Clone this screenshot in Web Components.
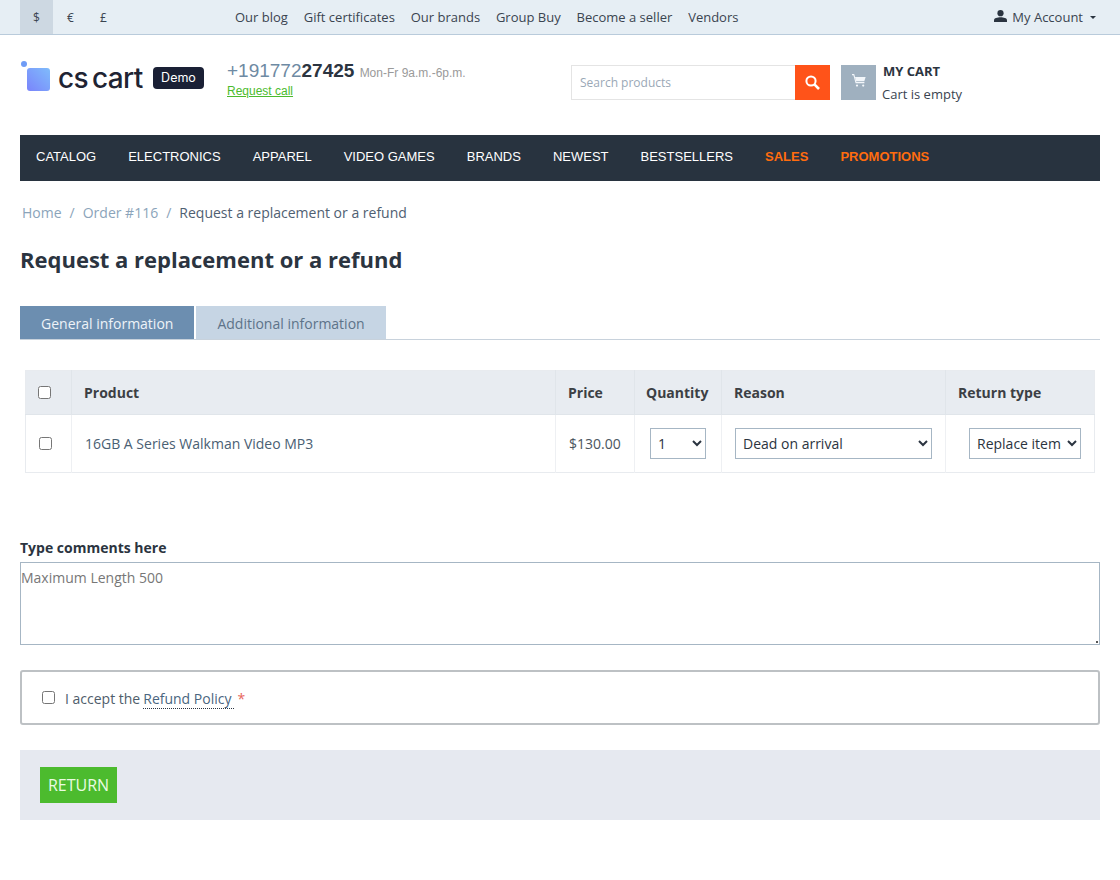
<!DOCTYPE html>
<html lang="en">
<head>
<meta charset="utf-8">
<title>Request a replacement or a refund</title>
<style>
    html, body { margin: 0; background: #fff; }
    body { font-family: "Open Sans", sans-serif; font-size: 14px; color: #2b3440; }
</style>
</head>
<body>
<top-bar></top-bar>
<site-header></site-header>
<main-nav></main-nav>
<page-crumbs></page-crumbs>
<page-tabs></page-tabs>
<return-table></return-table>
<return-form></return-form>

<script>
/* Top strip: currencies, links, account */
class TopBar extends HTMLElement {
    constructor() {
        super();
        this.attachShadow({ mode: 'open' });
    }

    connectedCallback() {
        this.shadowRoot.innerHTML = `
            <style>
                :host {
                    display: flex;
                    height: 34px;
                    padding: 0 20px;
                    background: #e6eef4;
                    border-bottom: 1px solid #b9cbdb;
                    font-size: 13px;
                    color: #3a4450;
                    align-items: stretch;
                }
                .currencies { display: flex; width: 215px; }
                .currencies span {
                    width: 33px;
                    display: flex;
                    align-items: center;
                    justify-content: center;
                    font-size: 12px;
                }
                .currencies span:nth-child(2) { padding-left: 1px; }
                .currencies .active { background: #cdd8e2; }
                .links { display: flex; gap: 15.85px; align-items: center; flex: 1; }
                .account { display: flex; align-items: center; gap: 5px; padding-right: 4px; }
                .account svg { display: block; margin-top: -2px; }
                .caret {
                    width: 0; height: 0;
                    border: 3px solid transparent;
                    border-top: 3px solid #2b3440;
                    border-bottom: 0;
                    margin-left: 2px;
                }
            </style>
            <div class="currencies">
                <span class="active">$</span><span>€</span><span>£</span>
            </div>
            <div class="links">
                <span>Our blog</span>
                <span>Gift certificates</span>
                <span>Our brands</span>
                <span>Group Buy</span>
                <span>Become a seller</span>
                <span>Vendors</span>
            </div>
            <div class="account">
                <svg width="13" height="12" viewBox="0 0 13 12"><circle cx="6.5" cy="3.2" r="3.1" fill="#2b3440"/><path d="M0 12V10.2C0 8.2 3.4 7.3 6.5 7.3S13 8.2 13 10.2V12Z" fill="#2b3440"/></svg>
                <span>My Account</span>
                <i class="caret"></i>
            </div>
        `;
    }
}

/* Logo, phone, search and cart */
class SiteHeader extends HTMLElement {
    constructor() {
        super();
        this.attachShadow({ mode: 'open' });
    }

    connectedCallback() {
        this.shadowRoot.innerHTML = `
            <style>
                :host {
                    display: flex;
                    height: 100px;
                    padding: 0 20px;
                    box-sizing: border-box;
                }
                .logo { width: 207px; display: flex; align-items: flex-start; padding-top: 26px; box-sizing: border-box; }
                .mark { position: relative; width: 30px; height: 30px; flex: none; }
                .mark i { position: absolute; left: 7px; top: 7px; width: 23px; height: 23px; border-radius: 3px; background: linear-gradient(45deg, #7a84fb, #7fbcfb); }
                .mark b { position: absolute; left: 1px; top: 0; width: 6px; height: 6px; border-radius: 50%; background: #6f9cf6; }
                .name { width: 85px; flex: none; font: 500 28px/30px Inter, sans-serif; letter-spacing: -0.6px; color: #1f2433; margin-left: 8px; margin-top: 2px; word-spacing: -3px; white-space: nowrap; }
                .demo {
                    flex: none;
                    margin: 6px 0 0 10px;
                    height: 22px;
                    width: 51px;
                    text-align: center;
                    border-radius: 4px;
                    background: #1a2035;
                    color: #fff;
                    font: 12.5px/22px Inter, sans-serif;
                }
                .phone { width: 344px; padding-top: 24px; font-family: "Liberation Sans", sans-serif; }
                .number { font-size: 19px; line-height: 24px; color: #6e8aa3; }
                .number b { color: #2b3440; }
                .number small { font-size: 12px; color: #9a9a9a; }
                .phone a { display: block; font-size: 12px; line-height: 16px; margin-top: -2px; color: #4cbb2e; text-decoration: underline; }
                .search { display: flex; width: 259px; height: 35px; margin-top: 30px; box-sizing: border-box; }
                .search .box {
                    flex: 1;
                    border: 1px solid #e4e4e4;
                    border-right: 0;
                    color: #9aa8b6;
                    font-size: 12px;
                    line-height: 33px;
                    padding-left: 8px;
                }
                .search button { width: 35px; border: 0; padding: 0; background: #ff5319; display: flex; align-items: center; justify-content: center; }
                .cart { display: flex; margin: 30px 0 0 11px; }
                .cart .icon { width: 35px; height: 35px; background: #9fb0bf; display: flex; align-items: center; justify-content: center; }
                .cart .icon svg { margin-bottom: 4px; }
                .cart .text { margin-left: 6px; font-size: 13px; line-height: 23px; margin-top: -5px; color: #3a4450; }
                .cart strong { display: block; margin-left: 1px; color: #2b3440; }
            </style>
            <div class="logo">
                <div class="mark"><i></i><b></b></div>
                <div class="name">cs cart</div>
                <div class="demo">Demo</div>
            </div>
            <div class="phone">
                <div class="number">+191772<b>27425</b> <small>Mon-Fr 9a.m.-6p.m.</small></div>
                <a>Request call</a>
            </div>
            <div class="search">
                <div class="box">Search products</div>
                <button aria-label="Search">
                    <svg width="15" height="15" viewBox="0 0 15 15" fill="none" stroke="#fff" stroke-width="2"><circle cx="6" cy="6" r="4.6"/><path d="M9.4 9.4L14 14" stroke-width="2.6"/></svg>
                </button>
            </div>
            <div class="cart">
                <div class="icon">
                    <svg width="14" height="13" viewBox="0 0 14 13" fill="none" stroke="#f2f6fa">
                        <path d="M0 .6H1.8L4 8.6H12.4" stroke-width="1.1"/>
                        <path d="M3 3H13.6L12.3 7.2H4.2Z" fill="#f2f6fa" stroke="none"/>
                        <circle cx="5" cy="11.6" r="1.1" fill="#f2f6fa" stroke="none"/>
                        <circle cx="11.2" cy="11.6" r="1.1" fill="#f2f6fa" stroke="none"/>
                    </svg>
                </div>
                <div class="text"><strong>MY CART</strong>Cart is empty</div>
            </div>
        `;
    }
}

/* Dark category menu */
class MainNav extends HTMLElement {
    constructor() {
        super();
        this.attachShadow({ mode: 'open' });
    }

    connectedCallback() {
        const items = ['CATALOG', 'ELECTRONICS', 'APPAREL', 'VIDEO GAMES', 'BRANDS', 'NEWEST', 'BESTSELLERS'];
        const links = items.map(i => `<span>${i}</span>`).join('');
        this.shadowRoot.innerHTML = `
            <style>
                :host {
                    display: flex;
                    align-items: center;
                    gap: 32px;
                    height: 46px;
                    margin: 0 20px;
                    padding: 0 0 4px 16px;
                    box-sizing: border-box;
                    background: #28333f;
                    color: #fff;
                    font: 13px "Liberation Sans", sans-serif;
                }
                .hot { color: #ff6c0e; font-weight: bold; }
            </style>
            ${links}
            <span class="hot">SALES</span>
            <span class="hot">PROMOTIONS</span>
        `;
    }
}

class PageCrumbs extends HTMLElement {
    constructor() {
        super();
        this.attachShadow({ mode: 'open' });
    }

    connectedCallback() {
        this.shadowRoot.innerHTML = `
            <style>
                :host { display: block; padding: 22px 20px 0; }
                .crumbs { padding-left: 2px; line-height: 20px; color: #8ba4ba; display: flex; gap: 8px; }
                .current { color: #4f6072; }
                h1 { margin: 21px 0 0; font-size: 22px; line-height: 30px; font-weight: 700; color: #2b3440; }
            </style>
            <div class="crumbs">
                <span>Home</span><span>/</span><span>Order #116</span><span>/</span>
                <span class="current">Request a replacement or a refund</span>
            </div>
            <h1>Request a replacement or a refund</h1>
        `;
    }
}

class PageTabs extends HTMLElement {
    constructor() {
        super();
        this.attachShadow({ mode: 'open' });
    }

    connectedCallback() {
        this.shadowRoot.innerHTML = `
            <style>
                :host {
                    display: flex;
                    gap: 2px;
                    margin: 32px 20px 0;
                    border-bottom: 1px solid #c8d2dc;
                }
                span { height: 33px; line-height: 35px; padding: 0 21px; }
                .on { background: #6c8eb0; color: #eef3f8; }
                .off { background: #c6d5e4; color: #5d7389; }
            </style>
            <span class="on">General information</span>
            <span class="off">Additional information</span>
        `;
    }
}

class ReturnTable extends HTMLElement {
    constructor() {
        super();
        this.attachShadow({ mode: 'open' });
    }

    connectedCallback() {
        this.shadowRoot.innerHTML = `
            <style>
                :host { display: block; margin: 30px 25px 0; }
                table { width: 1069px; table-layout: fixed; border-collapse: collapse; border: 1px solid #e8ebef; }
                th, td { border-left: 1px solid #e0e5ea; padding: 0 12px; text-align: left; box-sizing: border-box; }
                th:first-child, td:first-child { border-left: 0; padding: 0; }
                th { height: 44px; background: #e8ecf1; color: #3c3f44; font-weight: 700; border-bottom: 1px solid #e0e5ea; }
                th.qty { padding-left: 11px; }
                td { height: 58px; border-left-color: #eef0f3; }
                input { display: block; width: 13px; height: 13px; margin: 0 0 0 12px; }
                td input { margin-left: 13px; }
                .product { color: #4a6073; padding-left: 13px; }
                .price { padding-left: 13px; color: #4a5560; }
                select {
                    height: 31px;
                    background: #fff;
                    border: 1px solid #a6b6c4;
                    border-radius: 0;
                    font: 14px "Open Sans", sans-serif;
                    color: #2b3440;
                    padding: 0 3px;
                    box-sizing: border-box;
                    display: block;
                }
            </style>
            <table>
                <colgroup>
                    <col style="width:46px"><col style="width:484px"><col style="width:79px">
                    <col style="width:87px"><col style="width:224px"><col style="width:149px">
                </colgroup>
                <tr>
                    <th><input type="checkbox" aria-label="All"></th>
                    <th>Product</th><th>Price</th><th class="qty">Quantity</th><th>Reason</th><th>Return type</th>
                </tr>
                <tr>
                    <td><input type="checkbox" aria-label="Item"></td>
                    <td class="product">16GB A Series Walkman Video MP3</td>
                    <td class="price">$130.00</td>
                    <td><select style="width:56px;margin-left:3px"><option>1</option></select></td>
                    <td><select style="width:197px;margin-left:1px"><option>Dead on arrival</option></select></td>
                    <td><select style="width:112px;margin-left:11px"><option>Replace item</option></select></td>
                </tr>
            </table>
        `;
    }
}

class ReturnForm extends HTMLElement {
    constructor() {
        super();
        this.attachShadow({ mode: 'open' });
    }

    connectedCallback() {
        this.shadowRoot.innerHTML = `
            <style>
                :host { display: block; margin: 65px 20px 60px; }
                label { display: block; font-weight: 700; line-height: 20px; margin-bottom: 4px; }
                .field { position: relative; }
                textarea {
                    display: block;
                    width: 100%;
                    height: 83px;
                    box-sizing: border-box;
                    border: 1px solid #a6b6c4;
                    border-radius: 0;
                    padding: 5px 0 0 0;
                    font: 14px/20px "Open Sans", sans-serif;
                    outline: 0;
                    resize: none;
                }
                textarea::placeholder { color: #777; opacity: 1; }
                .grip { position: absolute; right: 2px; bottom: 2px; width: 2px; height: 2px; background: #555; }
                .accept {
                    margin-top: 25px;
                    height: 55px;
                    box-sizing: border-box;
                    border: 2px solid #bdc1c4;
                    border-radius: 3px;
                    display: flex;
                    align-items: center;
                    padding: 4px 0 0 20px;
                    color: #4f5d6b;
                }
                .accept input { margin: 0 10px 4px 0; width: 13px; height: 13px; }
                .accept span, .accept i { line-height: 18px; padding-bottom: 1px; }
                .accept a { color: #4a6580; border-bottom: 1px dotted #2b3440; margin-left: 3px; padding-right: 3px; line-height: 18px; }
                .accept i { font-style: normal; color: #e8665c; margin-left: 3px; }
                .actions {
                    margin-top: 25px;
                    height: 70px;
                    box-sizing: border-box;
                    padding: 17px 20px 0;
                    background: #e6e9f0;
                }
                button {
                    display: block;
                    width: 77px;
                    height: 36px;
                    border: 0;
                    padding: 0;
                    background: #4cbb2e;
                    color: #eafbe2;
                    font: 16px "Open Sans", sans-serif;
                }
            </style>
            <label>Type comments here</label>
            <div class="field">
                <textarea placeholder="Maximum Length 500"></textarea>
                <div class="grip"></div>
            </div>
            <div class="accept">
                <input type="checkbox" aria-label="Accept">
                <span>I accept the</span><a>Refund Policy</a><i>*</i>
            </div>
            <div class="actions"><button>RETURN</button></div>
        `;
    }
}

customElements.define('top-bar', TopBar);
customElements.define('site-header', SiteHeader);
customElements.define('main-nav', MainNav);
customElements.define('page-crumbs', PageCrumbs);
customElements.define('page-tabs', PageTabs);
customElements.define('return-table', ReturnTable);
customElements.define('return-form', ReturnForm);
</script>
</body>
</html>
